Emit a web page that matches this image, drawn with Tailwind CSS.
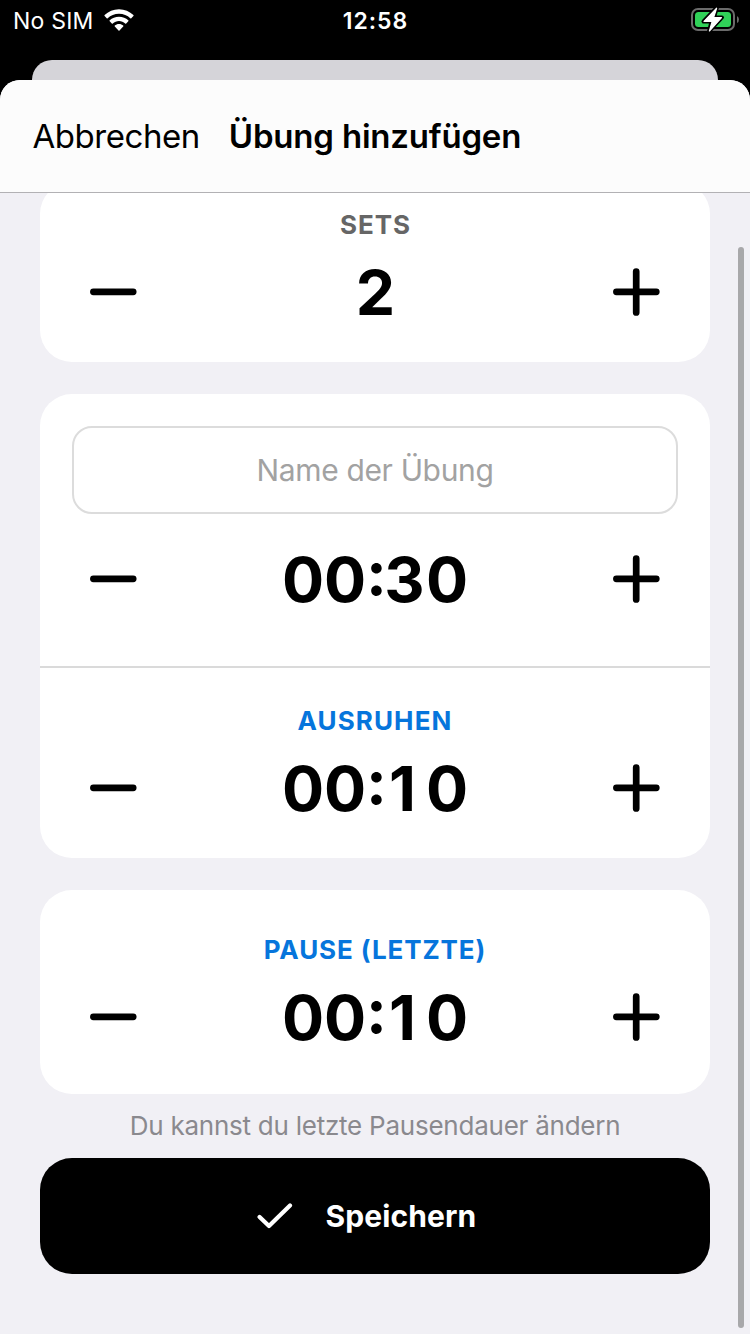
<!DOCTYPE html>
<html lang="de">
<head>
<meta charset="utf-8">
<title>Übung hinzufügen</title>
<script src="https://cdn.jsdelivr.net/npm/@tailwindcss/browser@4"></script>
</head>
<body class="bg-black">
<svg class="hidden">
  <symbol id="minus" viewBox="0 0 48 48"><path d="M3.400 23.800H43.200" fill="none" stroke="#000" stroke-width="6.700" stroke-linecap="round"/></symbol>
  <symbol id="plus" viewBox="0 0 48 48"><path d="M4.400 23.800H44.300M24.200 3.600V44.400" fill="none" stroke="#000" stroke-width="6.700" stroke-linecap="round"/></symbol>
</svg>
<div class="relative flex h-[1334px] w-[750px] flex-col overflow-hidden bg-black font-['Inter','Liberation_Sans',sans-serif] text-black">
  <header class="grid h-[60px] shrink-0 grid-cols-3 px-[13px] text-white">
    <div class="flex h-10 items-center gap-[10px]">
      <span class="pt-[2px] text-[23px] leading-10 tracking-[0.2px] whitespace-nowrap">No SIM</span>
      <svg class="h-[23px] w-[30px]" viewBox="0 0 30 23" fill="#fff">
        <path d="M15 .3C20.600 .3 25.700 2.500 29.400 6.100Q29.900 6.600 29.400 7.100L27.300 9.200Q26.800 9.700 26.300 9.200C23.400 6.400 19.400 4.700 15 4.700S6.600 6.400 3.700 9.200Q3.200 9.700 2.700 9.200L.6 7.100Q.1 6.600 .6 6.100C4.300 2.500 9.400 .3 15 .3Z"/>
        <path d="M15 7.700C18.600 7.700 21.900 9.100 24.300 11.300Q24.800 11.800 24.300 12.300L22.200 14.400Q21.700 14.900 21.200 14.400C19.600 12.900 17.400 12 15 12S10.400 12.900 8.800 14.400Q8.300 14.900 7.800 14.400L5.700 12.300Q5.200 11.800 5.700 11.300C8.100 9.100 11.400 7.700 15 7.700Z"/>
        <path d="M15 15C16.700 15 18.100 15.600 19.200 16.500Q19.700 17 19.200 17.500L15.500 21.500Q15 22 14.500 21.500L10.800 17.500Q10.300 17 10.800 16.500C11.900 15.600 13.300 15 15 15Z"/>
      </svg>
    </div>
    <div class="h-10 pl-px text-center text-[23px] leading-[42px] font-semibold tracking-[1px]">12:58</div>
    <div class="flex h-10 items-center justify-end">
      <svg class="-mr-[3px] h-8 w-[50px]" viewBox="0 0 50 32">
        <rect x="2" y="5" width="42" height="21" rx="6" fill="none" stroke="#6b6b6b" stroke-width="2"/>
        <rect x="5" y="8" width="36" height="15" rx="3.500" fill="#30d158"/>
        <path d="M47 12Q49 13 49 15.500T47 19Z" fill="#6b6b6b"/>
        <path d="M27 3.500 13.500 17.500H21.500L19 27.500 32 13.500H24Z" fill="#fff" stroke="#000" stroke-width="4" stroke-linejoin="round"/>
        <path d="M26.600 4.200 14 17.300H22.200L19.400 27 31.500 13.700H23.500Z" fill="#fff" stroke="#fff" stroke-width="1.200" stroke-linejoin="round"/>
      </svg>
    </div>
  </header>
  <div class="mx-8 h-5 shrink-0 rounded-t-[20px] bg-[#d5d4d9]"></div>
  <main class="flex flex-1 flex-col overflow-hidden rounded-t-[20px] bg-[#f1f0f5]">
    <div class="flex h-[113px] shrink-0 items-center gap-[29px] border-b border-[#b2b1b4] bg-[#fcfcfc] pt-[2px] pl-[32.500px] text-[33px] whitespace-nowrap">
      <span class="tracking-[-0.45px]">Abbrechen</span>
      <h1 class="font-semibold tracking-[-0.2px]">Übung hinzufügen</h1>
    </div>
    <div class="flex flex-1 flex-col px-10">
      <section class="-mt-[11px] h-[180px] rounded-[32px] bg-white px-[50px] pt-[26px] [clip-path:inset(11px_0_0_0)]">
        <h2 class="pl-px text-center text-[26px] leading-[34px] font-bold tracking-[0.9px] text-[#666]">SETS</h2>
        <div class="mt-[13px] flex h-[74px] items-center justify-between">
          <svg class="h-12 w-12"><use href="#minus"/></svg>
          <span class="pl-px text-[62.500px] leading-[74px] font-bold">2</span>
          <svg class="h-12 w-12"><use href="#plus"/></svg>
        </div>
      </section>
      <section class="mt-8 h-[464px] rounded-[32px] bg-white">
        <div class="h-[274px] border-b-2 border-[#dadada] px-8 pt-8">
          <div class="flex h-[88px] items-center justify-center rounded-[20px] border-2 border-[#dcdcdc] text-[30px] tracking-[-0.35px] text-[#a2a2a2]">Name der Übung</div>
          <div class="mx-[18px] mt-7 flex h-[74px] items-center justify-between">
            <svg class="h-12 w-12"><use href="#minus"/></svg>
            <div class="flex text-center text-[62.500px] leading-[74px] font-bold"><span class="w-[42px]">0</span><span class="w-[42px]">0</span><span class="-mt-[7px] w-[18px]">:</span><span class="w-[42px] pr-px">3</span><span class="w-[42px]">0</span></div>
            <svg class="h-12 w-12"><use href="#plus"/></svg>
          </div>
        </div>
        <div class="px-[50px] pt-9">
          <h2 class="text-center text-[26px] leading-[34px] font-bold tracking-[1.100px] text-[#0675dc]">AUSRUHEN</h2>
          <div class="mt-[13px] flex h-[74px] items-center justify-between">
            <svg class="h-12 w-12"><use href="#minus"/></svg>
            <div class="flex text-center text-[62.500px] leading-[74px] font-bold"><span class="w-[42px]">0</span><span class="w-[42px]">0</span><span class="-mt-[7px] w-[18px]">:</span><span class="w-[42px] pr-[5px]">1</span><span class="w-[42px]">0</span></div>
            <svg class="h-12 w-12"><use href="#plus"/></svg>
          </div>
        </div>
      </section>
      <section class="mt-8 h-[204px] rounded-[32px] bg-white px-[50px] pt-[43px]">
        <h2 class="text-center text-[26px] leading-[34px] font-bold tracking-[0.900px] text-[#0675dc]">PAUSE (LETZTE)</h2>
        <div class="mt-[13px] flex h-[74px] items-center justify-between">
          <svg class="h-12 w-12"><use href="#minus"/></svg>
          <div class="flex text-center text-[62.500px] leading-[74px] font-bold"><span class="w-[42px]">0</span><span class="w-[42px]">0</span><span class="-mt-[7px] w-[18px]">:</span><span class="w-[42px] pr-[5px]">1</span><span class="w-[42px]">0</span></div>
          <svg class="h-12 w-12"><use href="#plus"/></svg>
        </div>
      </section>
      <p class="h-16 text-center text-[26px] leading-[64px] tracking-[-0.24px] whitespace-nowrap text-[#8a898e]">Du kannst du letzte Pausendauer ändern</p>
      <button class="flex h-[116px] items-center justify-center gap-[33px] rounded-[32px] bg-black pr-[17px] text-[30px] font-bold text-white">
        <svg class="h-[26px] w-9" viewBox="0 0 36 26"><path d="M2.600 14 12 23 33 2.500" fill="none" stroke="#fff" stroke-width="4.200" stroke-linecap="round" stroke-linejoin="round"/></svg>
        <span class="tracking-[0.100px]">Speichern</span>
      </button>
    </div>
  </main>
  <div class="absolute top-[247px] left-[738px] h-[1081px] w-[6px] rounded-full bg-[#a8a8aa]"></div>
</div>
</body>
</html>
